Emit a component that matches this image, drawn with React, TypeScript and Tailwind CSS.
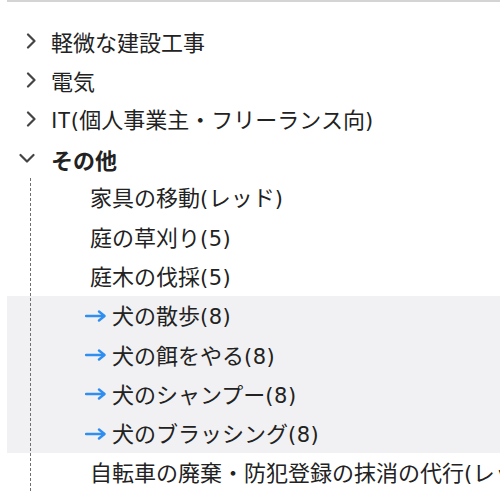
import React from "react";

const ChevronRight = () => (
  <svg width="11" height="16" viewBox="0 0 11 16" fill="none">
    <path d="M2 1.5 L8.5 8 L2 14.5" stroke="#444" strokeWidth="2.2" strokeLinecap="round" strokeLinejoin="round" />
  </svg>
);

const ChevronDown = () => (
  <svg width="16" height="11" viewBox="0 0 16 11" fill="none">
    <path d="M1.5 2 L8 8.5 L14.5 2" stroke="#444" strokeWidth="2.2" strokeLinecap="round" strokeLinejoin="round" />
  </svg>
);

const Arrow = () => (
  <svg width="21" height="12" viewBox="0 0 21 12" fill="none">
    <path d="M1 6 H19" stroke="#2f8ef0" strokeWidth="2.4" strokeLinecap="round" />
    <path d="M14 1.5 L19.5 6 L14 10.5" stroke="#2f8ef0" strokeWidth="2.4" strokeLinecap="round" strokeLinejoin="round" />
  </svg>
);

function Label({ text, bold }: { text: string; bold?: boolean }) {
  const parts = text.split(/([()0-9]+)/).filter((p) => p.length > 0);
  return (
    <span className={bold ? "leading-none font-bold" : "leading-none"}>
      {parts.map((p, i) =>
        /^[()0-9]+$/.test(p) ? (
          <span key={i} className="font-['DejaVu_Sans'] font-normal text-[21px] tracking-[0.5px]">
            {p}
          </span>
        ) : (
          <span key={i}>{p}</span>
        )
      )}
    </span>
  );
}

const collapsed = ["軽微な建設工事", "電気", "IT(個人事業主・フリーランス向)"];

const children: { label: string; arrow?: boolean }[] = [
  { label: "家具の移動(レッド)" },
  { label: "庭の草刈り(5)" },
  { label: "庭木の伐採(5)" },
  { label: "犬の散歩(8)", arrow: true },
  { label: "犬の餌をやる(8)", arrow: true },
  { label: "犬のシャンプー(8)", arrow: true },
  { label: "犬のブラッシング(8)", arrow: true },
  { label: "自転車の廃棄・防犯登録の抹消の代行(レッド)" },
];

export default function App() {
  return (
    <div
      className="w-[500px] h-[500px] overflow-hidden bg-white text-[#222] text-[22px] whitespace-nowrap"
      style={{ fontFamily: '"Noto Sans CJK JP", "Noto Sans", sans-serif' }}
    >
      <div className="ml-[7px] border-t-2 border-[#d4d4d4] pt-[19px]">
        {collapsed.map((c) => (
          <div key={c} className="flex items-center h-[39.3px]">
            <div className="w-[44px] pl-[19px] flex items-center">
              <ChevronRight />
            </div>
            <Label text={c} />
          </div>
        ))}
        <div className="flex items-center h-[39.3px]">
          <div className="w-[44px] pl-[12px] flex items-center">
            <ChevronDown />
          </div>
          <Label text="その他" bold />
        </div>
        <div className="relative">
          {children.map((ch) => (
            <div
              key={ch.label}
              className={
                ch.arrow
                  ? "flex items-center h-[39.3px] bg-[#f1f1f3] pl-[78px] gap-[6px]"
                  : "flex items-center h-[39.3px] pl-[83px]"
              }
            >
              {ch.arrow && <Arrow />}
              <Label text={ch.label} />
            </div>
          ))}
          <div className="absolute left-[23px] top-0 bottom-0 w-px bg-[repeating-linear-gradient(to_bottom,#707070_0,#707070_3px,transparent_3px,transparent_5px)]" />
        </div>
      </div>
    </div>
  );
}
